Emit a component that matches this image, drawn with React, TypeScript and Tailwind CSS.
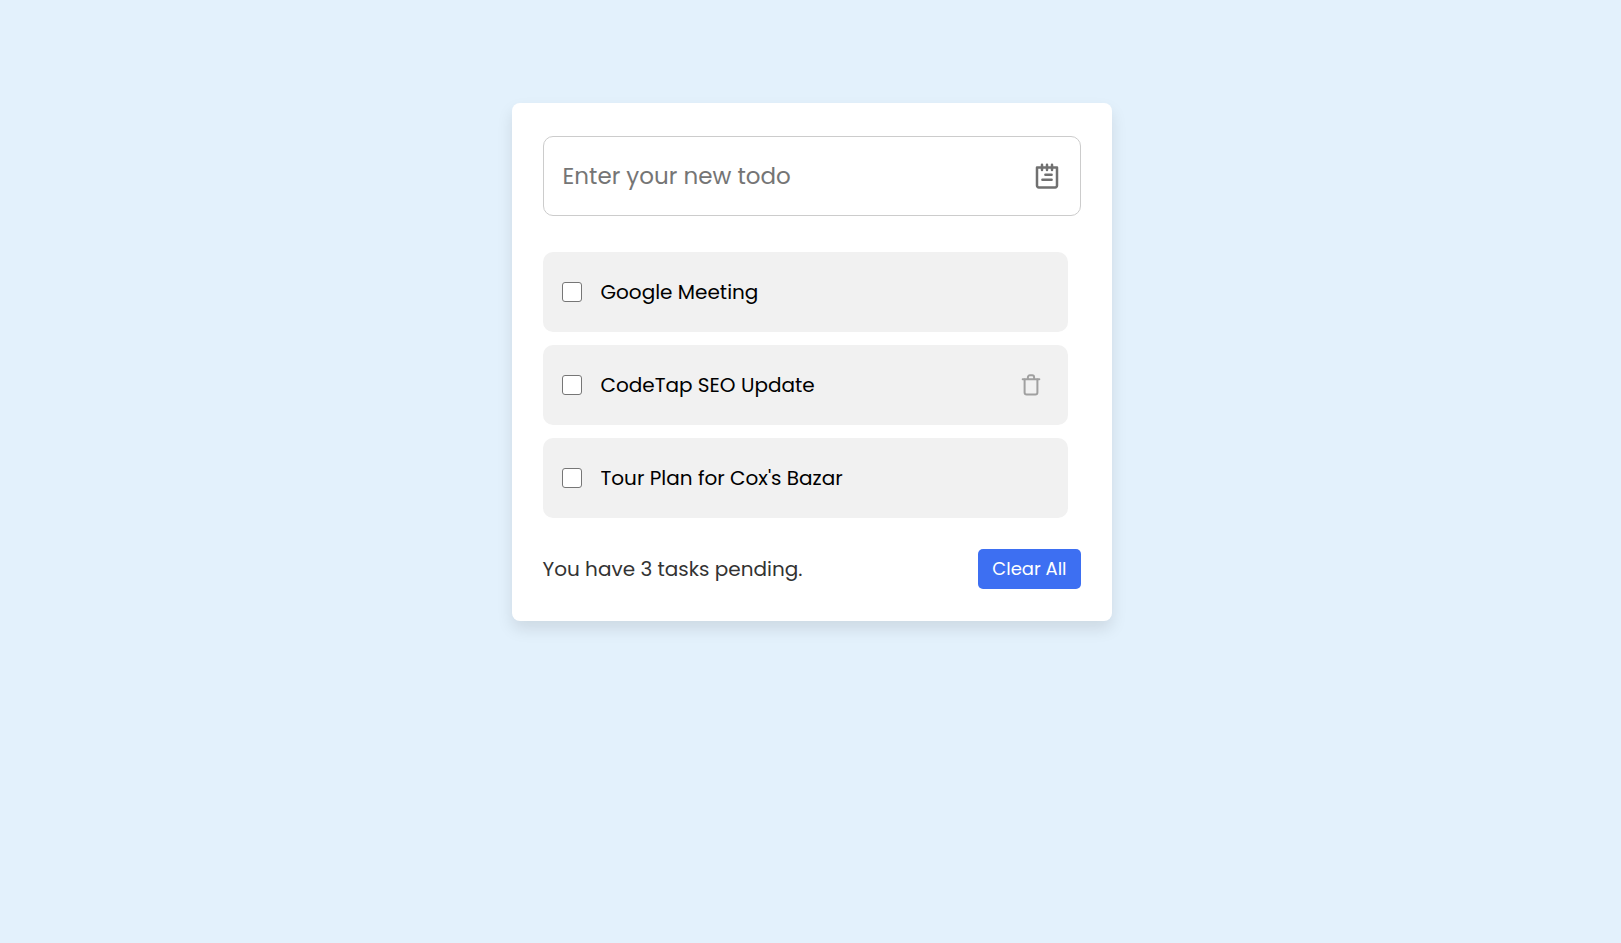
import { FormEvent, useState } from 'react';

type Todo = {
  id: number;
  title: string;
  done: boolean;
}

const initialTodos: Todo[] = [
  { id: 1, title: 'Google Meeting', done: false },
  { id: 2, title: 'CodeTap SEO Update', done: false },
  { id: 3, title: "Tour Plan for Cox's Bazar", done: false },
];

export default function App() {
  const [todos, setTodos] = useState<Todo[]>(initialTodos);
  const [title, setTitle] = useState('');
  // the row under the pointer shows its delete button
  const [activeId, setActiveId] = useState(2);

  const pending = todos.filter((todo) => !todo.done).length;

  const onSubmit = (event: FormEvent) => {
    event.preventDefault();
    if (!title.trim()) return;
    setTodos((list) => [...list, { id: Date.now(), title: title.trim(), done: false }]);
    setTitle('');
  };

  const onToggle = (id: number) =>
    setTodos((list) => list.map((todo) => (todo.id === id ? { ...todo, done: !todo.done } : todo)));

  const onRemove = (id: number) => setTodos((list) => list.filter((todo) => todo.id !== id));

  return (
    <div className="min-h-screen bg-[#e3f1fc] pt-[103px] pr-4 pb-16 pl-[18px] font-[Poppins,Inter,sans-serif]">
      <main className="mx-auto w-full max-w-[600px] rounded-lg bg-white px-[31px] pt-[33px] pb-8 shadow-[0_8px_16px_rgba(0,0,0,0.1)]">
        <form
          onSubmit={onSubmit}
          className="flex h-20 items-center rounded-[10px] border border-[#cccccc] pr-[21px] pl-[19px]"
        >
          <input
            type="text"
            aria-label="New todo"
            placeholder="Enter your new todo"
            value={title}
            onChange={(event) => setTitle(event.target.value)}
            className="min-w-0 flex-1 bg-transparent text-[23px] text-[#333333] outline-none placeholder:text-[#757575]"
          />
          <button type="submit" aria-label="Add todo" className="text-[#707070]">
            <NoteIcon />
          </button>
        </form>

        <ul className="mt-9 mr-[13px] flex flex-col gap-[13px]">
          {todos.map((todo) => (
            <TodoRow
              key={todo.id}
              todo={todo}
              active={todo.id === activeId}
              onEnter={() => setActiveId(todo.id)}
              onToggle={() => onToggle(todo.id)}
              onRemove={() => onRemove(todo.id)}
            />
          ))}
        </ul>

        <div className="mt-[31px] flex items-center justify-between">
          <span className="text-xl text-[#333333]">You have {pending} tasks pending.</span>
          <button
            type="button"
            onClick={() => setTodos([])}
            className="h-10 rounded-[5px] bg-[#3d6ff2] px-[14px] text-lg text-white"
          >
            Clear All
          </button>
        </div>
      </main>
    </div>
  );
}

type TodoRowProps = {
  todo: Todo;
  active: boolean;
  onEnter: () => void;
  onToggle: () => void;
  onRemove: () => void;
}

function TodoRow({ todo, active, onEnter, onToggle, onRemove }: TodoRowProps) {
  return (
    <li
      onMouseEnter={onEnter}
      className="flex h-20 items-center rounded-[10px] bg-[#f1f1f1] pr-[27px] pl-[19px]"
    >
      <label className="flex min-w-0 flex-1 items-center gap-[19px]">
        <input
          type="checkbox"
          checked={todo.done}
          onChange={onToggle}
          className="size-5 shrink-0 appearance-none rounded-[3px] border border-[#767676] bg-white checked:border-[#3d6ff2] checked:bg-[#3d6ff2]"
        />
        <span className={`truncate text-xl ${todo.done ? 'text-gray-500 line-through' : 'text-black'}`}>
          {todo.title}
        </span>
      </label>
      {active && (
        <button type="button" aria-label={`Delete ${todo.title}`} onClick={onRemove} className="text-[#a0a0a0]">
          <TrashIcon />
        </button>
      )}
    </li>
  );
}

function NoteIcon() {
  return (
    <svg width="24" height="26" viewBox="0 0 24 26" fill="none" stroke="currentColor" strokeWidth="2.5" strokeLinecap="round" strokeLinejoin="round">
      <path d="M2 4.6h20v18a1.8 1.8 0 0 1-1.8 1.8H3.8A1.8 1.8 0 0 1 2 22.6z" />
      <path d="M7 1.7v5.2M12 1.7v5.2M17 1.7v5.2" />
      <path d="M10.4 11.8h6.2M7.4 16.8h9.2" />
    </svg>
  );
}

function TrashIcon() {
  return (
    <svg width="20" height="22" viewBox="0 0 20 22" fill="none" stroke="currentColor" strokeWidth="2" strokeLinecap="round" strokeLinejoin="round">
      <path d="M1.7 5.2h16.6" />
      <path d="M6.9 5V3.2a1.9 1.9 0 0 1 1.9-1.9h2.4a1.9 1.9 0 0 1 1.9 1.9V5" />
      <path d="M3.6 5.4v13.2a2 2 0 0 0 2 2h8.8a2 2 0 0 0 2-2V5.4" />
    </svg>
  );
}
